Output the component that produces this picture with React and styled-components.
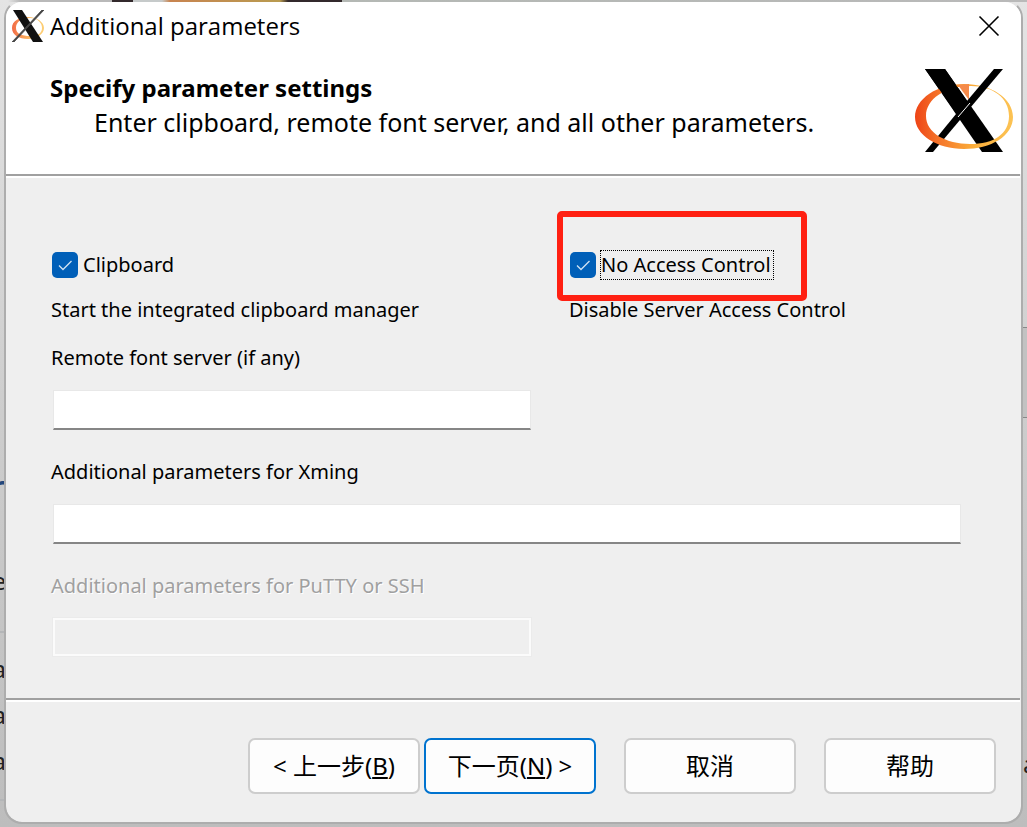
import React from "react";
import styled, { createGlobalStyle } from "styled-components";

const Global = createGlobalStyle`
  * { box-sizing: border-box; }
  body { margin: 0; background: #d4d4d4; }
`;

const Desktop = styled.div`
  display: grid;
  min-height: 100vh;
  overflow: hidden;
  background:
    linear-gradient(
      to right,
      #e4e4e4 8px, #b9b9b9 20px, #b9b9b9 112px,
      #33292c 112px, #33292c 133px,
      #c6caca 133px, #c6caca 162px,
      #c88450 170px, #b99b50 280px,
      #33292c 288px, #33292c 342px,
      #b4b8b4 342px, #b9b9b9
    ) top / 100% 2px no-repeat,
    linear-gradient(to bottom, #e4e4e4 0, #cdcdcd 50%, #bdbdbd 100%);
  > * { grid-area: 1 / 1; }
`;

const Backdrop = styled.div`
  display: flex;
  justify-content: space-between;
  overflow: hidden;
`;

const BehindText = styled.div`
  width: 6px;
  padding-top: 462px;
  display: flex;
  flex-direction: column;
  align-items: flex-end;
  font: 24px/46px "Noto Sans", sans-serif;
  color: #222;
  background:
    linear-gradient(#b4b6b8, #b4b6b8) 0 631px / 100% 2px no-repeat,
    linear-gradient(#b4b6b8, #b4b6b8) 0 799px / 100% 2px no-repeat;
`;

const BehindHeading = styled.span`
  font-size: 44px;
  line-height: 52px;
  color: #24477c;
  margin-bottom: 44px;
`;

const BehindRow = styled.span`
  margin-bottom: 42px;
`;

const BehindRight = styled.div`
  width: 4px;
  padding-top: 741px;
  overflow: hidden;
  font: 24px/46px "Noto Sans", sans-serif;
  color: #222;
  background:
    linear-gradient(#888, #888) 0 327px / 100% 1px no-repeat,
    linear-gradient(#888, #888) 0 417px / 100% 1px no-repeat,
    linear-gradient(#c2c2c2, #c2c2c2) 0 327px / 100% 91px no-repeat;
`;

const Dialog = styled.main`
  position: relative;
  align-self: start;
  margin: 0 4px 3px;
  border: 2px solid #adadad;
  border-top-color: transparent;
  border-radius: 18px;
  overflow: hidden;
  background: #efefef;
  background-clip: padding-box;
  font: 20px/28px "Noto Sans", "Noto Sans CJK SC", sans-serif;
  color: #000;
`;

const TitleBar = styled.header`
  display: flex;
  align-items: center;
  height: 48px;
  padding: 0 21px 0 6px;
  background: #fff;
`;

const Title = styled.h1`
  flex: 1;
  margin: 0 0 0 6px;
  font: 400 24px/32px "Open Sans", sans-serif;
`;

const CloseButton = styled.button`
  display: flex;
  padding: 0;
  border: 0;
  background: none;
`;

const Banner = styled.section`
  display: flex;
  justify-content: space-between;
  height: 124px;
  padding: 18px 8px 0 44px;
  background: #fff;
`;

const BannerTitle = styled.h2`
  margin: 4px 0 0;
  font: 700 24px/32px "Noto Sans", sans-serif;
`;

const BannerText = styled.p`
  margin: 0 0 0 44px;
  font-size: 25px;
  line-height: 36px;
`;

const Rule = styled.hr`
  height: 4px;
  margin: 0 1px 0 0;
  border: 0;
  border-top: 2px solid #a0a0a0;
  background: #fff;
`;

const Form = styled.form`
  padding: 72px 62px 14px 45px;
`;

const Checks = styled.div`
  display: grid;
  grid-template-columns: 518fr 390fr;
`;

const CheckLabel = styled.label`
  position: relative;
  display: flex;
  width: max-content;
  align-items: center;
  gap: 4px;
  padding-left: 1px;
`;

const Check = styled.input`
  appearance: none;
  width: 26px;
  height: 26px;
  margin: 0;
  border-radius: 5px;
  background: #005fb8;
`;

const Tick = styled.svg`
  position: absolute;
  left: 1px;
  pointer-events: none;
`;

const CheckText = styled.span`
  padding-right: 2px;
  border: 1px ${(p) => (p.$focused ? "dotted #000" : "solid transparent")};
`;

const Highlight = styled.div`
  position: absolute;
  inset: -39px -33px -21px -12px;
  border: 6px solid #ff2012;
  border-radius: 5px;
  pointer-events: none;
`;

const Hint = styled.p`
  margin: 16px 0 20px;
`;

const Field = styled.label`
  display: block;
  margin-bottom: 28px;
  color: ${(p) => (p.$disabled ? "#a0a0a0" : "#000")};
  text-shadow: ${(p) => (p.$disabled ? "1px 1px #fff" : "none")};
`;

const TextInput = styled.input`
  display: block;
  width: 100%;
  max-width: ${(p) => (p.$short ? "478px" : "none")};
  height: 40px;
  margin: 18px 0 0 2px;
  border: 1px solid #e8e8e8;
  border-bottom: 2px solid #868686;
  background: #fff;
  &:disabled {
    height: 38px;
    border: 2px solid #fbfbfb;
    outline: 1px solid #ebebeb;
    background: #efefef;
  }
`;

const Footer = styled.footer`
  display: flex;
  justify-content: flex-end;
  gap: 28px;
  padding: 36px 25px 28px;
`;

const Steps = styled.div`
  display: flex;
  gap: 4px;
`;

const Button = styled.button`
  width: 172px;
  height: 56px;
  padding: 0;
  border: 2px solid ${(p) => (p.$primary ? "#0073cf" : "#cdcdcd")};
  border-radius: 7px;
  background: #fdfdfd;
  color: #000;
  font: 24px/32px "Noto Sans", "Noto Sans CJK SC", sans-serif;
  white-space: pre;
`;

function RingGradient({ id }) {
  return (
    <defs>
      <linearGradient id={id} x1="0" x2="1" y1="0" y2="0">
        <stop offset="0" stopColor="#ee4416" />
        <stop offset="0.25" stopColor="#f5762a" />
        <stop offset="0.6" stopColor="#fbae3a" />
        <stop offset="1" stopColor="#fcc354" />
      </linearGradient>
    </defs>
  );
}

function XLogo() {
  return (
    <svg width="98" height="84" viewBox="0 0 98 84" aria-hidden="true">
      <RingGradient id="ring" />
      <path d="M10 1H30L88 84H67Z" fill="#000" />
      <path d="M50 46L18 84H10L41 46Z" fill="#000" />
      <path
        fillRule="evenodd"
        fill="url(#ring)"
        d="M49 16C76 16 98 30 98 49S76 81 49 81S0 67 0 49S22 16 49 16ZM56 18C30 18 11 31 11 48S31 76 55 76S94 66 94 48S78 18 56 18Z"
      />
      <path d="M43 17L54 16L54 32Z" fill="#f58a4a" />
      <path d="M10 1H30L54 36L43 48Z" fill="#000" />
      <path d="M79 1H88L50 46H41Z" fill="#000" />
      <path d="M55 35L43 49" stroke="#fff" strokeWidth="1" />
    </svg>
  );
}

function XIcon() {
  return (
    <svg width="32" height="32" viewBox="0 0 32 32" aria-hidden="true">
      <RingGradient id="ring-small" />
      <path
        fillRule="evenodd"
        fill="url(#ring-small)"
        opacity="0.8"
        d="M16 7C25 7 32 12 32 18S25 29 16 29S0 25 0 18S7 7 16 7ZM18 8C9 8 4 12 4 18S10 26 18 26S30 23 30 18S26 8 18 8Z"
      />
      <path d="M1 0H10L31 32H21Z" fill="#111" />
      <path d="M30 0H32L2 32H0Z" fill="#444" stroke="#444" strokeWidth="0.8" />
    </svg>
  );
}

function CheckBox({ children, focused, id }) {
  return (
    <CheckLabel htmlFor={id}>
      <Check id={id} type="checkbox" defaultChecked />
      <Tick width="26" height="26" viewBox="0 0 26 26" aria-hidden="true">
        <path d="M7 13.5L11 17.5L19.5 9" fill="none" stroke="#cfe2f3" strokeWidth="1.3" />
      </Tick>
      <CheckText $focused={focused}>{children}</CheckText>
      {focused && <Highlight />}
    </CheckLabel>
  );
}

export default function App() {
  return (
    <>
      <Global />
      <Desktop>
        <Backdrop aria-hidden="true">
          <BehindText>
            <BehindHeading>r</BehindHeading>
            <BehindRow>e</BehindRow>
            <span>a</span>
            <span>a</span>
            <span>a</span>
          </BehindText>
          <BehindRight>a</BehindRight>
        </Backdrop>
        <Dialog>
          <TitleBar>
            <XIcon />
            <Title>Additional parameters</Title>
            <CloseButton aria-label="Close">
              <svg width="22" height="22" viewBox="0 0 22 22">
                <path d="M1.500 1.500L20.500 20.500M20.500 1.500L1.500 20.500" stroke="#000" strokeWidth="1.600" />
              </svg>
            </CloseButton>
          </TitleBar>
          <Banner>
            <div>
              <BannerTitle>Specify parameter settings</BannerTitle>
              <BannerText>Enter clipboard, remote font server, and all other parameters.</BannerText>
            </div>
            <XLogo />
          </Banner>
          <Rule />
          <Form>
            <Checks>
              <div>
                <CheckBox id="clipboard">Clipboard</CheckBox>
                <Hint>Start the integrated clipboard manager</Hint>
              </div>
              <div>
                <CheckBox id="access" focused>No Access Control</CheckBox>
                <Hint>Disable Server Access Control</Hint>
              </div>
            </Checks>
            <Field>
              Remote font server (if any)
              <TextInput type="text" $short />
            </Field>
            <Field>
              Additional parameters for Xming
              <TextInput type="text" />
            </Field>
            <Field $disabled>
              Additional parameters for PuTTY or SSH
              <TextInput type="text" disabled $short />
            </Field>
          </Form>
          <Rule />
          <Footer>
            <Steps>
              <Button type="button">&lt; 上一步(<u>B</u>)</Button>
              <Button type="button" $primary>下一页(<u>N</u>) &gt;</Button>
            </Steps>
            <Button type="button">取消</Button>
            <Button type="button">帮助</Button>
          </Footer>
        </Dialog>
      </Desktop>
    </>
  );
}
